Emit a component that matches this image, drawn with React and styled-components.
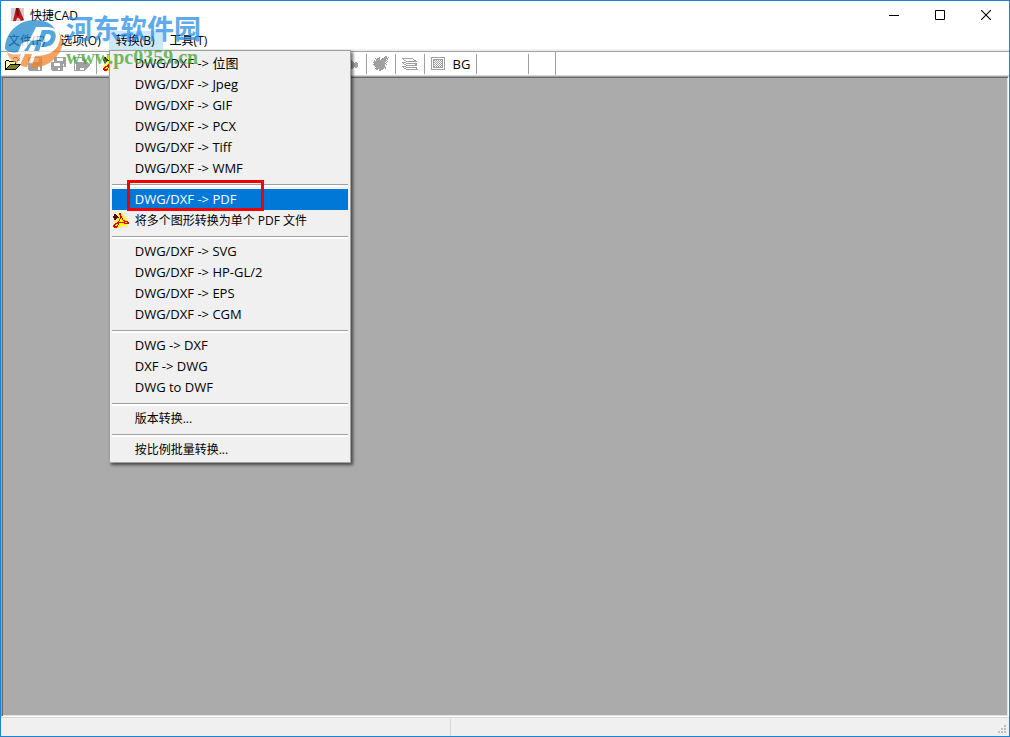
import React, { useState } from "react";
import styled, { createGlobalStyle } from "styled-components";

const GlobalStyle = createGlobalStyle`
  * {
    box-sizing: border-box;
  }
  html, body, #root {
    height: 100%;
    margin: 0;
  }
  body {
    font-family: "Open Sans", "Noto Sans CJK SC", sans-serif;
    font-size: 12px;
    color: #000;
  }
  button {
    border: 0;
    padding: 0;
    margin: 0;
    background: none;
    font: inherit;
    color: inherit;
  }
`;

const Window = styled.div`
  position: relative;
  display: flex;
  flex-direction: column;
  height: 100vh;
  border: 1px solid #1883d7;
  background: #fff;
  overflow: hidden;
`;

const TitleBar = styled.header`
  display: flex;
  align-items: center;
  height: 28px;
  padding-left: 10px;
`;

const Title = styled.h1`
  flex: 1;
  margin: 0 0 0 3px;
  font-size: 12px;
  font-weight: 400;
`;

const CaptionButton = styled.button`
  display: flex;
  align-items: center;
  justify-content: center;
  width: 46px;
  height: 28px;

  &:hover {
    background: #e5e5e5;
  }
`;

const MenuBar = styled.nav`
  display: flex;
  align-items: flex-start;
  height: 22px;
  padding-top: 2px;
  border-bottom: 2px solid #f0f0f0;
`;

const MenuBarItem = styled.div`
  position: relative;
`;

const MenuBarButton = styled.button`
  height: 20px;
  padding: 0 8px 2px 7px;
  white-space: nowrap;
  background: ${props => (props.$open ? "#cce8ff" : "transparent")};
`;

const Dropdown = styled.ul`
  position: absolute;
  top: 19px;
  left: 0;
  z-index: 2;
  width: 242px;
  margin: 0;
  padding: 2px;
  list-style: none;
  background: #f0f0f0;
  border: 1px solid #a0a0a0;
  box-shadow: 2px 2px 3px rgba(0, 0, 0, 0.6);
`;

const MenuRow = styled.button`
  display: grid;
  grid-template-columns: 23px 1fr;
  align-items: center;
  width: 100%;
  height: 21px;
  padding-bottom: 2px;
  text-align: left;
  white-space: nowrap;
  font-size: ${props => (props.$latin ? "13px" : "12px")};
  color: ${props => (props.$active ? "#fff" : "#000")};
  background: ${props => (props.$active ? "#0078d7" : "transparent")};
`;

const MenuIcon = styled.span`
  display: flex;
  justify-content: center;
  padding: 2px 4px 0 0;
`;

const MenuDivider = styled.li`
  height: 10px;
  padding-top: 5px;

  &::after {
    content: "";
    display: block;
    height: 2px;
    background: #fff;
    border-top: 1px solid #a0a0a0;
  }
`;

const Marker = styled.span`
  position: absolute;
  top: 129px;
  left: 17px;
  width: 137px;
  height: 31px;
  border: 3px solid #f00000;
  pointer-events: none;
`;

const ToolBar = styled.div`
  display: flex;
  align-items: center;
  height: 25px;
  border-top: 1px solid #a0a0a0;
  border-bottom: 1px solid #d8d8d8;
`;

const ToolGroup = styled.div`
  display: flex;
  justify-content: space-between;
  width: ${props => props.$width || "auto"};
`;

const ToolButton = styled.button`
  display: flex;
  align-items: center;
  justify-content: center;
  width: 23px;
  height: 22px;
  font-size: 13px;
`;

const ToolDivider = styled.span`
  width: 1px;
  height: ${props => (props.$tall ? "23px" : "20px")};
  margin: 0 ${props => props.$after || "2px"} 0 3px;
  background: #a0a0a0;
`;

const Canvas = styled.main`
  flex: 1;
  background: #ababab;
  border: 1px solid #fff;
  border-top-color: #a0a0a0;
  border-left-color: #a0a0a0;
  box-shadow: inset 1px 1px #696969, inset -1px -1px #e3e3e3;
`;

const StatusBar = styled.footer`
  display: flex;
  justify-content: space-between;
  align-items: flex-end;
  height: 19px;
  background: #f0f0f0;
  border-top: 1px solid #d7d7d7;
`;

const StatusCell = styled.span`
  width: 450px;
  height: 17px;
  border-right: 1px solid #d7d7d7;
`;

const Watermark = styled.div`
  position: absolute;
  top: 9px;
  left: 4px;
  z-index: 3;
  display: flex;
  gap: 4px;
  opacity: 0.74;
  pointer-events: none;
`;

const WatermarkText = styled.div`
  color: #2a8de6;
  font-family: "Noto Sans CJK SC", sans-serif;
  font-size: 27px;
  font-weight: 700;
  line-height: 36px;
`;

const WatermarkUrl = styled.div`
  color: #3da535;
  font-family: "Liberation Serif", serif;
  font-size: 20px;
  font-weight: 700;
  line-height: 22px;
`;

// One letter per pixel, "." is transparent
const palette = {
  k: "#000000",
  g: "#a0a0a0",
  w: "#ffffff",
  y: "#ffff66",
  o: "#808000",
  Y: "#ffff00",
  r: "#e00000",
  m: "#600000"
};

const bitmaps = {
  open: [
    ".........kkk....",
    "........k...k.k.",
    ".............kk.",
    ".kkk........kkk.",
    "kywykkkkkkk.....",
    "kwywywywywk.....",
    "kywywywywyk.....",
    "kwywykkkkkkkkkkk",
    "kywykoooooooook.",
    "kwykoooooooook..",
    "kykoooooooook...",
    "kkoooooooook....",
    "kkkkkkkkkkk....."
  ],
  save: [
    "gggggggggggggg",
    "ggg........g.g",
    "ggg........ggg",
    "ggg........ggg",
    "ggg........ggg",
    "ggggggggggggggg",
    "gggggggggggggg",
    "gggggggggggggg",
    "gggggggggggggg",
    "gggggggggg..gg",
    "gggggggggg..gg",
    "gggggggggg..gg",
    "gggggggggg..gg",
    ".ggggggggggggg"
  ],
  saveAs: [
    "...gggggggggggg",
    "...ggg......ggg",
    "...ggg......ggg",
    "...ggg......ggg",
    "...gggggggggggg",
    "ggggggggggggggg",
    "ggg......gggggg",
    "ggg......ggg.gg",
    "ggg......ggg.gg",
    "ggggggggggggggg",
    "gggggggggggg...",
    "ggggggg..ggg...",
    "ggggggg..ggg...",
    ".ggggggggggg..."
  ],
  exportDoc: [
    "ggggggggg.......",
    "g.......gg......",
    "g.......ggg.....",
    "g.......gggg....",
    "g.........gg....",
    "g..ggggggggggg..",
    "g.ggggggggggggg.",
    "g.gggggggggggggg",
    "g.gggggggggggggg",
    "g.ggggggggggggg.",
    "g.gggggggggggg..",
    "g.gggg....ggg...",
    "g.gggg....gg....",
    "ggggggggggg....."
  ],
  pdf: [
    ".....YrrY..Y....",
    ".mm..YrrYY..Y...",
    ".mmm.YYrY.Y.....",
    "mmmmmYYrrYY.Y...",
    "mmmmmmYrrY.Y....",
    ".mmmYYYrYrYY.Y..",
    ".mm.YYrYYrYYY...",
    "..Y.YYrYYYrrYYY.",
    ".Y.YYrYYYYYrrrr.",
    "..YYrrrrrrrrYYrr",
    "YYrrrrYYYYYrrrrr",
    ".rrYYrYYYYYYYYY.",
    "rrYYrYYY.Y.YY...",
    "rrrrrYY.Y.Y..Y..",
    ".rrrYY.Y..Y.Y..."
  ],
  hand: [
    "...ggg........",
    "..gggggg......",
    "ggggggggg.....",
    "gggggggggg.gg.",
    "gggggggggggggg",
    "gggggggggggggg",
    "gggggggggggggg",
    "gggggggggggggg",
    "gggggggggg.gg.",
    "..ggggggg....."
  ],
  bird: [
    "............gg..",
    "......g....ggg.g",
    "..g.ggg..gggggg.",
    "...gggg.ggggg.g.",
    ".g.ggggggggggg..",
    ".gggggggggggg.g.",
    "gggggggggggg.g..",
    ".gggggggggggg...",
    "gggggggggggg.g..",
    ".ggggggggggg....",
    "..gggggggggg....",
    "...gggggggggg...",
    "..ggggggggg.g...",
    "...gg.gggg......",
    "......gg........"
  ],
  layers: [
    "ggggggggggg.....",
    ".g.........g....",
    "..gg........gg..",
    "....ggggggggggg.",
    "gggg............",
    ".g..ggggggggggg.",
    "..gg.........gg.",
    "....ggggggggggg.",
    "gggg............",
    ".g..ggggggggggg.",
    "..gg..........g.",
    "....gggggggggggg"
  ],
  grid: [
    "gggggggggggggg",
    "g............g",
    "g.gggggggggg.g",
    "g.gg.g.g.g.g.g",
    "g.g.g.g.g.gg.g",
    "g.gg.g.g.g.g.g",
    "g.g.g.g.g.gg.g",
    "g.gg.g.g.g.g.g",
    "g.g.g.g.g.gg.g",
    "g.gg.g.g.g.g.g",
    "g.gggggggggg.g",
    "g............g",
    "gggggggggggggg"
  ]
};

const PixelIcon = ({ name }) => {
  const rows = bitmaps[name];
  return (
    <svg width="16" height={rows.length} shapeRendering="crispEdges" aria-hidden="true">
      {rows.map((row, y) =>
        row.split("").map((c, x) =>
          c === "." ? null : <rect key={`${x}-${y}`} x={x} y={y} width="1" height="1" fill={palette[c]} />
        )
      )}
    </svg>
  );
};

const AppLogo = () => (
  <svg width="16" height="16" viewBox="0 0 16 16" aria-hidden="true">
    <rect x="0" y="1" width="13" height="13" fill="#cfcfcf" />
    <path d="M2 14 5 1h3l5 12-3 1-2-3H6l-1 3z" fill="#c4161c" />
    <path d="M5 1h2l1 8H6z" fill="#5a1015" />
  </svg>
);

const menuGroups = [
  ["DWG/DXF -> 位图", "DWG/DXF -> Jpeg", "DWG/DXF -> GIF", "DWG/DXF -> PCX", "DWG/DXF -> Tiff", "DWG/DXF -> WMF"],
  ["DWG/DXF -> PDF", "将多个图形转换为单个 PDF 文件"],
  ["DWG/DXF -> SVG", "DWG/DXF -> HP-GL/2", "DWG/DXF -> EPS", "DWG/DXF -> CGM"],
  ["DWG -> DXF", "DXF -> DWG", "DWG to DWF"],
  ["版本转换..."],
  ["按比例批量转换..."]
];

const SiteWatermark = () => (
  <Watermark>
    <svg width="57" height="60" viewBox="0 0 57 60" aria-hidden="true">
      <path d="M3 32 20 20l32 0 3 20-22 14-20-2z" fill="#fff" />
      <path d="M0 39C0 23 13 10 30 10c9 0 16 3 20 9-4-2-8-2-12-2l-7 0-7 14-7 2-4 9C8 43 3 42 0 39z" fill="#1b87cc" />
      <path d="M26 31l6-1c4 0 5 2 4 5l-2 6h-5l2-6h-5l-3 6h-4z" fill="#1b87cc" />
      <path d="M37 20h7c6 0 8 4 6 10-2 5-6 7-12 7h-2l2-5h2c6 0 8-8 3-8h-2l-3 8h-5z" fill="#1b87cc" />
      <path d="M52 19c7 8 7 19 0 27-6 8-16 12-26 12l4-12c12 0 21-4 24-13 2-5 1-10-2-14z" fill="#f08428" />
      <path d="M2 42c4 3 9 3 14 2l-4 10C7 51 3 47 2 42z" fill="#f39a4c" />
      <path d="M20 44h7l-5 13c-3 0-5-1-7-2z" fill="#f08428" />
    </svg>
    <div>
      <WatermarkText>河东软件园</WatermarkText>
      <WatermarkUrl>www.pc0359.cn</WatermarkUrl>
    </div>
  </Watermark>
);

const Tool = ({ icon, label }) => (
  <ToolButton aria-label={label}>
    <PixelIcon name={icon} />
  </ToolButton>
);

const ConvertMenu = () => {
  const [active, setActive] = useState("DWG/DXF -> PDF");

  return (
    <Dropdown>
      {menuGroups.map((group, i) => (
        <React.Fragment key={i}>
          {i > 0 && <MenuDivider />}
          {group.map(label => (
            <li key={label}>
              <MenuRow
                $latin={label.startsWith("D")}
                $active={label === active}
                onMouseEnter={() => setActive(label)}
              >
                <MenuIcon>{label.startsWith("将") && <PixelIcon name="pdf" />}</MenuIcon>
                {label}
              </MenuRow>
            </li>
          ))}
        </React.Fragment>
      ))}
      <Marker />
    </Dropdown>
  );
};

const App = () => {
  return (
    <Window>
      <GlobalStyle />
      <TitleBar>
        <AppLogo />
        <Title>快捷CAD</Title>
        <CaptionButton aria-label="Minimize">
          <svg width="10" height="10" shapeRendering="crispEdges"><path d="M0 5h10v1H0z" /></svg>
        </CaptionButton>
        <CaptionButton aria-label="Maximize">
          <svg width="10" height="10"><path d="M.5.5h9v9h-9z" fill="none" stroke="#000" /></svg>
        </CaptionButton>
        <CaptionButton aria-label="Close">
          <svg width="10" height="10"><path d="M0 0l10 10M10 0L0 10" stroke="#000" strokeWidth="1.1" /></svg>
        </CaptionButton>
      </TitleBar>
      <MenuBar>
        <MenuBarItem>
          <MenuBarButton>文件(F)</MenuBarButton>
        </MenuBarItem>
        <MenuBarItem>
          <MenuBarButton>选项(O)</MenuBarButton>
        </MenuBarItem>
        <MenuBarItem>
          <MenuBarButton $open>转换(B)</MenuBarButton>
          <ConvertMenu />
        </MenuBarItem>
        <MenuBarItem>
          <MenuBarButton>工具(T)</MenuBarButton>
        </MenuBarItem>
      </MenuBar>
      <ToolBar>
        <ToolGroup>
          <Tool icon="open" label="Open" />
          <Tool icon="save" label="Save" />
          <Tool icon="saveAs" label="Save as" />
          <Tool icon="exportDoc" label="Export" />
        </ToolGroup>
        <ToolDivider />
        <ToolGroup $width="264px">
          <Tool icon="pdf" label="Convert to PDF" />
          <Tool icon="hand" label="Pan" />
        </ToolGroup>
        <ToolDivider />
        <Tool icon="bird" label="Redraw" />
        <ToolDivider />
        <Tool icon="layers" label="Layers" />
        <ToolDivider />
        <Tool icon="grid" label="Grid" />
        <ToolButton>BG</ToolButton>
        <ToolDivider $after="48px" />
        <ToolDivider $after="23px" />
        <ToolDivider $tall />
      </ToolBar>
      <Canvas />
      <StatusBar>
        <StatusCell />
        <svg width="11" height="11" fill="#bfbfbf" shapeRendering="crispEdges" aria-hidden="true">
          <path d="M6 0h2v2H6zM6 3h2v2H6zM3 3h2v2H3zM6 6h2v2H6zM3 6h2v2H3zM0 6h2v2H0z" />
        </svg>
      </StatusBar>
      <SiteWatermark />
    </Window>
  );
};

export default App;
